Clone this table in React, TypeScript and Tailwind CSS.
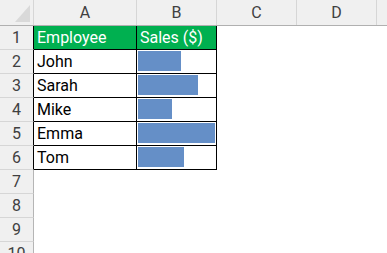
const columns = ["A", "B", "C", "D"];

const sales = [
  { name: "John", bar: 43 },
  { name: "Sarah", bar: 60 },
  { name: "Mike", bar: 34 },
  { name: "Emma", bar: 77 },
  { name: "Tom", bar: 46 },
];

const font = { fontFamily: '"Roboto", "Liberation Sans", sans-serif' };

function RowHeader({ n, dark }: { n: number; dark?: boolean }) {
  return (
    <div
      className={`w-[34px] shrink-0 h-full flex items-center justify-center pt-[1px] bg-[#f0f0f0] text-[16px] text-[#404040] border-b border-b-[#d6d6d6] border-r ${dark ? "border-r-black" : "border-r-[#b5b5b5]"}`}
    >
      {n}
    </div>
  );
}

export default function App() {
  return (
    <div className="w-[387px] h-[253px] overflow-hidden bg-white select-none" style={font}>
      {/* column letters */}
      <div className="flex h-[26px] bg-[#f0f0f0] border-b border-[#b0b0b0]">
        <div className="w-[34px] shrink-0 border-r border-[#d6d6d6] relative">
          <div className="absolute left-[15px] top-[5px] w-0 h-0 border-l-[15px] border-l-transparent border-b-[17px] border-b-[#d9d9d9]" />
        </div>
        <div className="w-[103px] shrink-0 border-r border-[#d6d6d6] flex items-center justify-center pt-[1px] text-[16px] text-[#404040]">
          A
        </div>
        {columns.slice(1).map((c) => (
          <div
            key={c}
            className="w-[80px] shrink-0 border-r border-[#d6d6d6] flex items-center justify-center pt-[1px] text-[16px] text-[#404040]"
          >
            {c}
          </div>
        ))}
        <div className="flex-1" />
      </div>

      {/* header row */}
      <div className="flex h-[24px]">
        <RowHeader n={1} dark />
        <div className="w-[103px] shrink-0 bg-[#00b050] text-white text-[16px] pl-[3px] pt-[1px] flex items-center border-r border-b border-black">
          Employee
        </div>
        <div className="w-[80px] shrink-0 bg-[#00b050] text-white text-[16px] pl-[3px] pt-[1px] flex items-center border-r border-b border-black">
          Sales ($)
        </div>
      </div>

      {sales.map((row, i) => (
        <div key={row.name} className="flex h-[24px]">
          <RowHeader n={i + 2} dark />
          <div className="w-[103px] shrink-0 text-black text-[16px] pl-[3px] pt-[1px] flex items-center border-r border-b border-black">
            {row.name}
          </div>
          <div className="w-[80px] shrink-0 border-r border-b border-black">
            <div className="ml-[1px] mt-[1px] h-[20px] bg-[#658fc7]" style={{ width: row.bar }} />
          </div>
        </div>
      ))}

      {[7, 8, 9, 10].map((n) => (
        <div key={n} className="flex h-[24px]">
          <RowHeader n={n} />
        </div>
      ))}
    </div>
  );
}
